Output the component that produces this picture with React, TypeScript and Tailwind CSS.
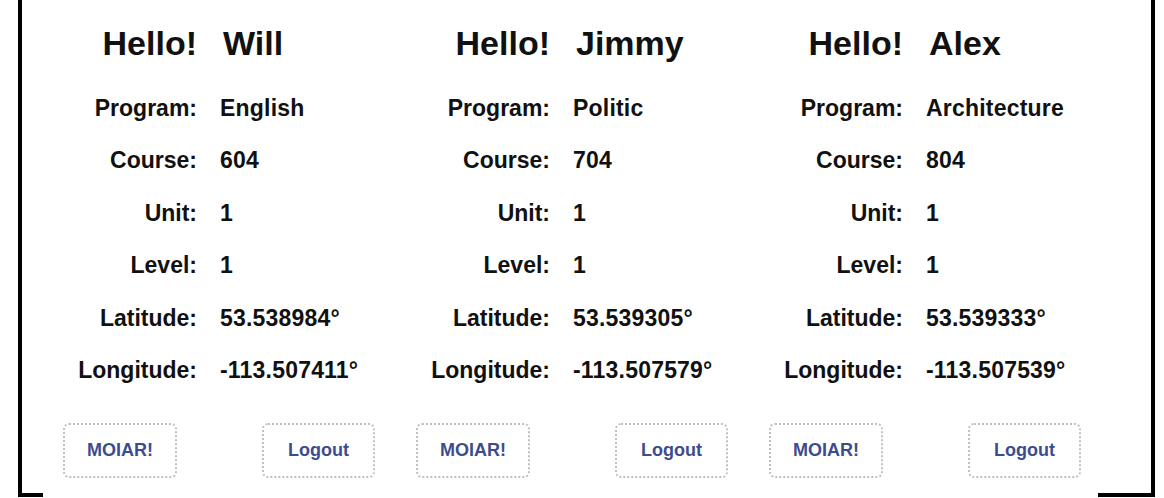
const users = [
  {
    name: "Will",
    program: "English",
    course: "604",
    unit: "1",
    level: "1",
    lat: "53.538984°",
    lng: "-113.507411°",
  },
  {
    name: "Jimmy",
    program: "Politic",
    course: "704",
    unit: "1",
    level: "1",
    lat: "53.539305°",
    lng: "-113.507579°",
  },
  {
    name: "Alex",
    program: "Architecture",
    course: "804",
    unit: "1",
    level: "1",
    lat: "53.539333°",
    lng: "-113.507539°",
  },
];

type User = (typeof users)[number];

const Row = ({ label, value }: { label: string; value: string }) => (
  <div className="flex h-[52.4px] items-center text-[23px] font-bold">
    <span className="w-[175px] text-right">{label}</span>
    <span className="ml-[23px] whitespace-nowrap tracking-[0.2px]">{value}</span>
  </div>
);

const StudentCard = ({ user }: { user: User }) => (
  <div className="flex w-[353px] flex-col pt-[23px]">
    <div className="mb-[19px] flex h-[40px] items-center text-[34px] font-bold">
      <span className="w-[175px] text-right">Hello!</span>
      <span className="ml-[26px]">{user.name}</span>
    </div>
    <Row label="Program:" value={user.program} />
    <Row label="Course:" value={user.course} />
    <Row label="Unit:" value={user.unit} />
    <Row label="Level:" value={user.level} />
    <Row label="Latitude:" value={user.lat} />
    <Row label="Longitude:" value={user.lng} />
    <div className="mt-[27px] flex justify-between pl-[41px]">
      <button className="h-[55px] w-[114px] rounded-md border-2 border-dotted border-[#c0c0c0] text-[18px] font-bold text-[#3d4c8e]">
        MOIAR!
      </button>
      <button className="h-[55px] w-[113px] rounded-md border-2 border-dotted border-[#c0c0c0] text-[18px] font-bold text-[#3d4c8e]">
        Logout
      </button>
    </div>
  </div>
);

export default function App() {
  return (
    <div
      className="h-[498px] w-[1164px] bg-white text-[#111]"
      style={{ fontFamily: '"Liberation Sans", Arial, sans-serif' }}
    >
      <div className="ml-[18px] flex h-[497px] w-[1137px] flex-col border-x-4 border-black">
        <div className="flex flex-1">
          {users.map((u) => (
            <StudentCard key={u.name} user={u} />
          ))}
        </div>
        <div className="flex h-1 justify-between">
          <div className="w-[21px] bg-black" />
          <div className="w-[53px] bg-black" />
        </div>
      </div>
    </div>
  );
}
